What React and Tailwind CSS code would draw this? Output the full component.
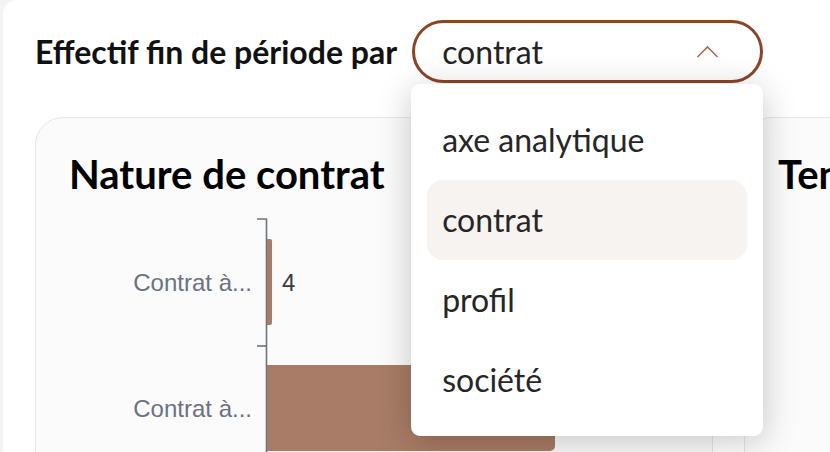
import React from "react";

const options = ["axe analytique", "contrat", "profil", "société"];

function ChevronUp() {
  return (
    <svg width="23" height="13" viewBox="0 0 23 13" fill="none">
      <polyline points="1.5,12 11.5,2 21.5,12" stroke="#a66d54" strokeWidth="1.6" />
    </svg>
  );
}

function ContractChart() {
  // bar chart: category axis on the left, bars grow right
  return (
    <svg width="677" height="260" className="block">
      <line x1="230.5" y1="25" x2="230.5" y2="260" stroke="#6b7280" strokeWidth="1.6" />
      {[25, 152].map(y => (
        <line key={y} x1="221" y1={y} x2="231" y2={y} stroke="#6b7280" strokeWidth="1.6" />
      ))}
      <path d="M231 45 h3 a2 2 0 0 1 2 2 v82 a2 2 0 0 1 -2 2 h-3 z" fill="#a87c66" />
      <path d="M231 171 h283 a5 5 0 0 1 5 5 v76 a5 5 0 0 1 -5 5 h-283 z" fill="#a87c66" />
      <g fontFamily="'Liberation Sans', Arial, sans-serif" fontSize="24">
        <text x="216" y="97" textAnchor="end" fill="#6b7280">Contrat à...</text>
        <text x="216" y="223" textAnchor="end" fill="#6b7280">Contrat à...</text>
        <text x="246" y="97" fill="#3b3b3b">4</text>
      </g>
    </svg>
  );
}

export default function App() {
  return (
    <div className="w-full h-[452px] overflow-hidden bg-[#f3f3f3] pl-[3px] font-['Lato','Noto_Sans',sans-serif]">
      <div className="h-full bg-white rounded-tl-[14px] pl-[32px] pt-[20px]">
        {/* header with select */}
        <div className="flex items-center gap-[15px]">
          <h1 className="text-[32px] font-bold text-[#111] whitespace-nowrap">
            Effectif fin de période par
          </h1>
          <div className="relative">
            <button className="w-[351px] h-[63px] rounded-full border-[3px] border-[#8a4527] bg-white flex items-center justify-between pl-[27px] pr-[41px]">
              <span className="text-[32px] text-[#222]">contrat</span>
              <ChevronUp />
            </button>
            <ul className="absolute left-[-1px] top-[64px] w-[352px] bg-white rounded-[9px] py-[16px] px-[16px] shadow-[0_6px_34px_rgba(0,0,0,0.22)] z-10">
              {options.map(o => (
                <li
                  key={o}
                  className={
                    "h-[80px] flex items-center pl-[15px] rounded-[16px] text-[32px] text-[#262626] " +
                    (o === "contrat" ? "bg-[#f7f3f0]" : "")
                  }
                >
                  {o}
                </li>
              ))}
            </ul>
          </div>
        </div>

        {/* cards */}
        <div className="mt-[34px] flex gap-[31px]">
          <div className="w-[678px] h-[420px] shrink-0 rounded-[28px] border border-[#e6e6e6] bg-[#fbfbfb] overflow-hidden">
            <h2 className="pt-[36px] px-[33px] text-[40px] leading-[40px] font-bold text-black">
              Nature de contrat
            </h2>
            <ContractChart />
          </div>
          <div className="w-[420px] h-[420px] shrink-0 rounded-[28px] border border-[#e6e6e6] bg-[#fbfbfb] overflow-hidden">
            <h2 className="pt-[36px] px-[33px] text-[40px] leading-[40px] font-bold text-black whitespace-nowrap">
              Temps de travail
            </h2>
          </div>
        </div>
      </div>
    </div>
  );
}
